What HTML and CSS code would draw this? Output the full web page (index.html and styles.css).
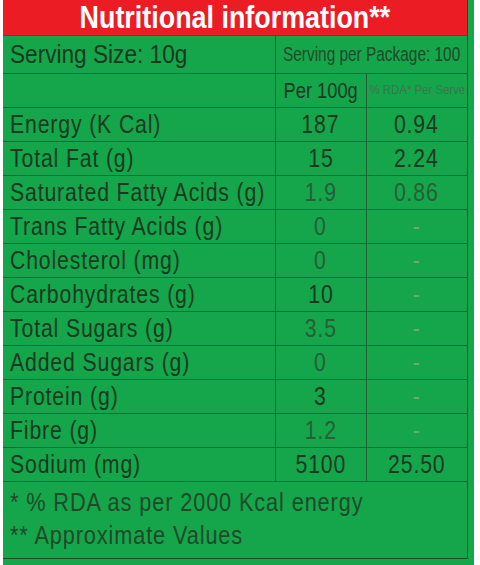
FILE: index.html
```html
<!DOCTYPE html>
<html lang="en">
<head>
    <meta charset="UTF-8">
    <title>Nutritional information</title>
    <link rel="stylesheet" href="styles.css">
</head>
<body>
    <div class="panel">
        <table class="facts">
            <colgroup>
                <col class="c-name">
                <col class="c-per">
                <col class="c-rda">
            </colgroup>
            <tr>
                <th class="title" colspan="3"><span class="t">Nutritional information**</span></th>
            </tr>
            <tr class="serving">
                <td class="big"><span class="t">Serving Size: 10g</span></td>
                <td class="pack" colspan="2"><span class="t">Serving per Package: 100</span></td>
            </tr>
            <tr class="heads">
                <td></td>
                <td class="per"><span class="t">Per 100g</span></td>
                <td class="rda"><span class="t">% RDA* Per Serve</span></td>
            </tr>
            <tr><td><span class="t">Energy (K Cal)</span></td><td class="num"><span class="t">187</span></td><td class="num"><span class="t">0.94</span></td></tr>
            <tr><td><span class="t">Total Fat (g)</span></td><td class="num"><span class="t">15</span></td><td class="num"><span class="t">2.24</span></td></tr>
            <tr><td><span class="t">Saturated Fatty Acids (g)</span></td><td class="num soft"><span class="t">1.9</span></td><td class="num soft"><span class="t">0.86</span></td></tr>
            <tr><td><span class="t">Trans Fatty Acids (g)</span></td><td class="num soft"><span class="t">0</span></td><td class="num dash"><span class="t">-</span></td></tr>
            <tr><td><span class="t">Cholesterol (mg)</span></td><td class="num soft"><span class="t">0</span></td><td class="num dash"><span class="t">-</span></td></tr>
            <tr><td><span class="t">Carbohydrates (g)</span></td><td class="num"><span class="t">10</span></td><td class="num dash"><span class="t">-</span></td></tr>
            <tr><td><span class="t">Total Sugars (g)</span></td><td class="num soft"><span class="t">3.5</span></td><td class="num dash"><span class="t">-</span></td></tr>
            <tr><td><span class="t">Added Sugars (g)</span></td><td class="num soft"><span class="t">0</span></td><td class="num dash"><span class="t">-</span></td></tr>
            <tr><td><span class="t">Protein (g)</span></td><td class="num"><span class="t">3</span></td><td class="num dash"><span class="t">-</span></td></tr>
            <tr><td><span class="t">Fibre (g)</span></td><td class="num soft"><span class="t">1.2</span></td><td class="num dash"><span class="t">-</span></td></tr>
            <tr><td><span class="t">Sodium (mg)</span></td><td class="num"><span class="t">5100</span></td><td class="num"><span class="t">25.50</span></td></tr>
            <tr class="notes">
                <td colspan="3">
                    <p><span class="t">* % RDA as per 2000 Kcal energy</span></p>
                    <p><span class="t">** Approximate Values</span></p>
                </td>
            </tr>
        </table>
    </div>
</body>
</html>
```

FILE: styles.css
```css
body {
    margin: 0;
    background: #ffffff;
}

.panel {
    margin-left: 3px;
    width: 471px;
    height: 565px;
    padding-right: 7px;
    box-sizing: border-box;
    background: #15a54b;
    overflow: hidden;
}

.facts {
    width: 464px;
    table-layout: fixed;
    border-collapse: collapse;
    font-family: "Liberation Sans", Arial, sans-serif;
    color: #173a20;
    border-right: 1px solid #1b4f2a;
    border-bottom: 1px solid #1b4f2a;
}

.c-name { width: 272px; }
.c-per { width: 91px; }
.c-rda { width: 101px; }

/* condensed look: squeeze the glyphs horizontally */
.t {
    display: inline-block;
    transform: scaleX(0.85);
    transform-origin: left center;
    white-space: nowrap;
}

.facts td {
    border-top: 1px solid #285f37;
    border-left: 1px solid #285f37;
    padding: 0 0 0 7px;
    height: 33px;
    font-size: 25px;
    letter-spacing: 1px;
    line-height: 33px;
    white-space: nowrap;
}

.facts tr td:first-child {
    border-left: none;
}

.title {
    background: #ec1c24;
    color: #ffffff;
    font-size: 32px;
    font-weight: bold;
    height: 35px;
    padding: 0;
    line-height: 35px;
    text-align: center;
}

.title .t {
    transform: scaleX(0.84);
    transform-origin: center;
}

.serving td {
    height: 37px;
}

.facts .big {
    font-size: 26px;
    letter-spacing: 0;
}

.big .t {
    transform: scaleX(0.87);
}

.facts .pack {
    font-size: 20px;
    letter-spacing: 0;
    color: #1f4a2a;
    padding-left: 7px;
}

.pack .t {
    transform: scaleX(0.77);
}

.facts .per {
    font-size: 22px;
    letter-spacing: 0;
    text-align: center;
    padding: 0;
}

.per .t {
    transform: scaleX(0.83);
    transform-origin: center;
}

.facts .rda {
    font-size: 12px;
    letter-spacing: 0;
    text-align: center;
    padding: 0;
    color: #3a774a;
}

.rda .t {
    transform: scaleX(0.95);
    transform-origin: center;
}

.facts .num {
    text-align: center;
    padding: 0;
}

.num .t {
    transform-origin: center;
}

.soft {
    color: #275f36;
}

.dash {
    color: #6aa87a;
}

.facts .notes td {
    height: 72px;
    padding-top: 4px;
    vertical-align: top;
    color: #1f4a2a;
}

.notes p {
    margin: 0;
    line-height: 33px;
}

.notes .t {
    transform: scaleX(0.87);
}
```
